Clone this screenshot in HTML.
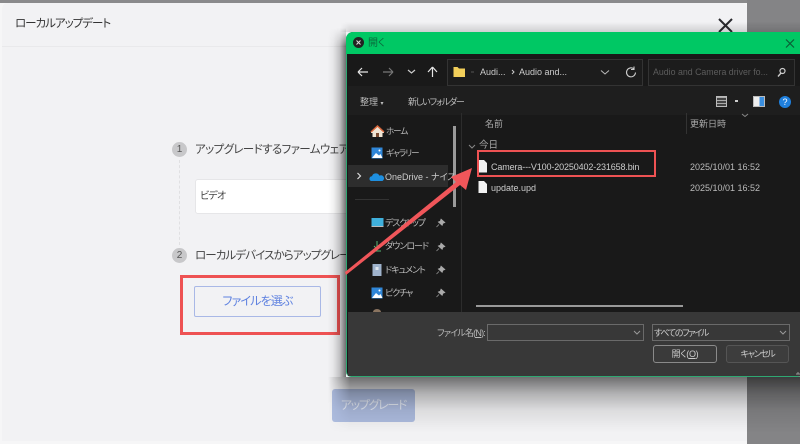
<!DOCTYPE html>
<html lang="ja"><head><meta charset="utf-8"><style>
*{box-sizing:border-box;margin:0;padding:0}
html,body{width:800px;height:444px;overflow:hidden;background:#f6f6f7}
body{position:relative;font-family:"Liberation Sans","Noto Sans CJK JP",sans-serif;font-feature-settings:"palt"}
#wrap{position:absolute;left:0;top:0;width:800px;height:444px;overflow:hidden;filter:blur(.3px)}
.a{position:absolute;white-space:nowrap}
.t{position:absolute;white-space:nowrap;line-height:14px}
#dlg{left:2px;top:3px;width:745px;height:438px;background:#f2f2f4;border-radius:6px 6px 0 0;overflow:hidden}
#win{left:346px;top:32px;width:456px;height:345px;background:#191919;border:1.5px solid #2fa872;border-top:none;border-radius:7px 7px 5px 5px;overflow:hidden}
svg{position:absolute;left:0;top:0;overflow:visible}
</style></head><body><div id="wrap">
<div class="a" style="left:0;top:0;width:800px;height:3px;background:#8a8a8c"></div>
<div class="a" style="left:747px;top:0;width:53px;height:444px;background:#848486"></div>
<div class="a" id="dlg"></div>
<div class="a" style="left:2px;top:46px;width:745px;height:1px;background:#e9e9eb"></div>
<div class="t" style="left:15px;top:17px;font-size:11.500px;letter-spacing:-1px;color:#333">ローカルアップデート</div>
<svg width="800" height="444"><path d="M719 19L732 32M732 19L719 32" stroke="#2a2a2e" stroke-width="2" fill="none"/></svg>
<div class="a" style="left:172px;top:142px;width:15px;height:15px;border-radius:50%;background:#c8c8ca;color:#555;font-size:10px;text-align:center;line-height:15px">1</div>
<div class="t" style="left:195px;top:143px;font-size:11.500px;letter-spacing:-.6px;color:#444">アップグレードするファームウェアを</div>
<div class="a" style="left:179px;top:160px;height:85px;border-left:1px dashed #e0e0e2"></div>
<div class="a" style="left:195px;top:179px;width:170px;height:35px;background:#fff;border:1px solid #e6e6e8;border-radius:3px"></div>
<div class="t" style="left:200px;top:190px;font-size:10px;letter-spacing:-.8px;color:#444">ビデオ</div>
<div class="a" style="left:172px;top:248px;width:15px;height:15px;border-radius:50%;background:#c8c8ca;color:#555;font-size:10px;text-align:center;line-height:15px">2</div>
<div class="t" style="left:195px;top:249px;font-size:11.500px;letter-spacing:-.9px;color:#444">ローカルデバイスからアップグレード</div>
<div class="a" style="left:194px;top:286px;width:127px;height:31px;border:1px solid #a9b8e6;border-radius:2px;color:#5f82e0;font-size:12px;letter-spacing:-.85px;text-align:center;line-height:29px">ファイルを選ぶ</div>
<div class="a" style="left:180px;top:275px;width:160px;height:60px;border:3px solid #ee5253"></div>
<div class="a" style="left:332px;top:389px;width:83px;height:33px;background:#aebde0;border-radius:3px;color:#e6ebf6;font-size:12px;letter-spacing:-1.300px;text-align:center;line-height:33px">アップグレード</div>

<!-- window shadow -->
<div class="a" style="left:328px;top:28px;width:18px;height:349px;background:linear-gradient(90deg,rgba(0,0,0,0),rgba(0,0,0,.05) 30%,rgba(0,0,0,.2) 65%,rgba(0,0,0,.55));-webkit-mask-image:linear-gradient(180deg,transparent,#000 18px);mask-image:linear-gradient(180deg,transparent,#000 18px)"></div>
<div class="a" style="left:328px;top:377px;width:472px;height:56px;background:linear-gradient(180deg,rgba(0,0,0,.55),rgba(0,0,0,.27) 29%,rgba(0,0,0,.09) 59%,rgba(0,0,0,.02) 89%,rgba(0,0,0,0));-webkit-mask-image:linear-gradient(90deg,transparent,#000 22px);mask-image:linear-gradient(90deg,transparent,#000 22px)"></div>
<div class="a" style="left:340px;top:22px;width:460px;height:10px;background:linear-gradient(180deg,rgba(0,0,0,0),rgba(0,0,0,.14));-webkit-mask-image:linear-gradient(90deg,transparent,#000 10px);mask-image:linear-gradient(90deg,transparent,#000 10px)"></div>

<div class="a" id="win"></div>
<div class="a" style="left:346px;top:32px;width:454px;height:22px;background:#00c864;border-radius:7px 0 0 0"></div>
<div class="a" style="left:353px;top:37px;width:11px;height:11px;border-radius:50%;background:#222"></div>
<svg width="800" height="444"><path d="M356.5 40.500l4 4M360.500 40.500l-4 4" stroke="#ddd" stroke-width="1" fill="none"/><path d="M786 39.500l8 8M794 39.500l-8 8" stroke="#0b5c35" stroke-width="1.200" fill="none"/></svg>
<div class="t" style="left:368px;top:37px;font-size:10px;color:#0a6a3c">開く</div>

<div class="a" style="left:348px;top:54px;width:452px;height:32px;background:#191919"></div>
<div class="a" style="left:447px;top:59px;width:196px;height:27px;border:1px solid #333;background:#1c1c1c"></div>
<div class="a" style="left:648px;top:59px;width:147px;height:27px;border:1px solid #333;background:#1c1c1c"></div>
<div class="a" style="left:348px;top:86px;width:452px;height:29px;background:#1e1e1e"></div>
<div class="a" style="left:348px;top:115px;width:452px;height:197px;background:#191919"></div>
<div class="a" style="left:348px;top:165px;width:100px;height:22px;background:#2d2d2d"></div>
<div class="a" style="left:461px;top:113px;width:1px;height:199px;background:#2c2c2c"></div>
<div class="a" style="left:686px;top:113px;width:1px;height:21px;background:#333"></div>
<div class="a" style="left:453px;top:126px;width:2.500px;height:81px;background:#9a9a9a"></div>
<div class="a" style="left:476px;top:305px;width:207px;height:2px;background:#999"></div>
<div class="a" style="left:348px;top:312px;width:452px;height:64px;background:#383838"></div>

<svg width="800" height="444" fill="none">
<path d="M358 72h10M358 72l4-4M358 72l4 4" stroke="#e6e6e6" stroke-width="1.200"/>
<path d="M383 72h10M393 72l-4-4M393 72l-4 4" stroke="#777" stroke-width="1.200"/>
<path d="M408 70l3.500 3 3.500-3" stroke="#ccc" stroke-width="1.200"/>
<path d="M432.500 77V67M432.500 67l-4.500 5M432.500 67l4.500 5" stroke="#e6e6e6" stroke-width="1.200"/>
<path d="M453.500 67h4l1.500 1.500h6v8.500h-11.500z" fill="#f2cf5a"/>
<path d="M471 72h3" stroke="#555"/>
<path d="M512 70l2 2-2 2" stroke="#ccc"/>
<path d="M601 70.500l4 3.500 4-3.500" stroke="#bbb" stroke-width="1"/>
<path d="M634 69a4.500 4.500 0 1 0 1.500 3.500M634 66.500v3h-3" stroke="#ccc" stroke-width="1.100"/>
<circle cx="782.500" cy="71" r="2.500" stroke="#ccc" stroke-width="1.200"/><path d="M781 73l-3 3.500" stroke="#ccc" stroke-width="1.400"/>
<path d="M742 114l3 2.500 3-2.500" stroke="#888"/><path d="M469 145l3 3 3-3" stroke="#888"/>
<path d="M371 132l6.500-6 6.500 6v1h-1.500v4h-10v-4H371z" fill="#f0e4d4"/><path d="M371 132l6.500-6 6.500 6" stroke="#d9663a" stroke-width="1.500"/><rect x="376" y="133" width="3" height="4" fill="#7a4a30"/>
<rect x="371.500" y="147.500" width="11" height="11" fill="#2f86d8"/><path d="M372 158l4-5 3 2.500 1.500-1.500 2 4z" fill="#fff"/><circle cx="379.500" cy="150.500" r="1" fill="#fff"/>
<path d="M357.500 173l3 3-3 3" stroke="#ddd" stroke-width="1.200"/>
<path d="M371 181a2.500 2.500 0 0 1 1-4.800 4 4 0 0 1 7.500-.5 3 3 0 0 1 3 5.300z" fill="#1e8fe0"/>
<rect x="371.500" y="218" width="12" height="8.500" fill="#3fb0dc"/><rect x="371.500" y="226" width="12" height="1" fill="#bbb"/>
<path d="M377 241v8M374 246l3 3 3-3M373 251h8" stroke="#56b874" stroke-width="1"/>
<rect x="372.500" y="264" width="9" height="12" fill="#9fb3cc"/><rect x="375.500" y="267" width="3" height="3" fill="#dfe6ee"/>
<rect x="371.500" y="287.500" width="11" height="11" fill="#2f86d8"/><path d="M372 298l4-5 3 2.500 1.500-1.500 2 4z" fill="#fff"/><circle cx="379.500" cy="290.500" r="1" fill="#fff"/>
<path d="M441 219l4 3.500-2 .8-.8 2.200-4-3.500 2-.8zM439 224.500l-2.500 2.500M441 243l4 3.500-2 .8-.8 2.200-4-3.500 2-.8zM439 248.500l-2.500 2.500M441 266l4 3.500-2 .8-.8 2.200-4-3.500 2-.8zM439 271.500l-2.500 2.500M441 289l4 3.500-2 .8-.8 2.200-4-3.500 2-.8zM439 294.500l-2.500 2.500" fill="#aaa" stroke="#aaa" stroke-width=".6"/>
<path d="M478.500 160h5.500l3 3v9.500h-8.500z M478.500 181h5.500l3 3v9h-8.500z" fill="#f2f2f2"/>
<path d="M355 199.500h34" stroke="#333"/>
<path d="M373 312a4 3 0 0 1 8 0z" fill="#8a7460"/>
<path d="M634 331l3 3 3-3M780 331l3 3 3-3" stroke="#999"/>
<path d="M798 372v2M796 374h4" stroke="#999"/>
</svg>

<div class="t" style="left:480px;top:65px;font-size:9px;color:#ccc">Audi...</div>
<div class="t" style="left:519px;top:65px;font-size:9px;color:#ccc">Audio and...</div>
<div class="t" style="left:653px;top:65px;font-size:8.800px;color:#5c5c5c">Audio and Camera driver fo...</div>

<div class="t" style="left:360px;top:95px;font-size:9px;color:#bbb">整理 <span style="font-size:6px">▾</span></div>
<div class="t" style="left:408px;top:95px;font-size:9px;letter-spacing:-1.200px;color:#bbb">新しいフォルダー</div>
<div class="a" style="left:716px;top:96px;width:11px;height:11px;background:repeating-linear-gradient(#aaa 0 1px,#444 1px 3px);border:1px solid #bbb"></div>
<div class="a" style="left:735px;top:100px;width:3px;height:2px;background:#ccc"></div>
<div class="a" style="left:753px;top:96px;width:12px;height:11px;border:1px solid #bbb;background:linear-gradient(90deg,#eee 0 55%,#3a8fe0 55%)"></div>
<div class="a" style="left:779px;top:96px;width:12px;height:12px;border-radius:50%;background:#1f7fdc;color:#fff;font-size:9px;line-height:12px;text-align:center">?</div>

<div class="t" style="left:485px;top:117px;font-size:9px;color:#aaa">名前</div>
<div class="t" style="left:690px;top:117px;font-size:9px;color:#aaa">更新日時</div>
<div class="t" style="left:479px;top:139px;font-size:9.500px;color:#aaa">今日</div>
<div class="t" style="left:386px;top:124px;font-size:8.500px;letter-spacing:-1px;color:#bbb">ホーム</div>
<div class="t" style="left:386px;top:146px;font-size:8.500px;letter-spacing:-1px;color:#bbb">ギャラリー</div>
<div class="t" style="left:385px;top:170px;font-size:9px;color:#ccc">OneDrive - ナイス</div>
<div class="t" style="left:385px;top:216px;font-size:9px;letter-spacing:-1.200px;color:#bbb">デスクトップ</div>
<div class="t" style="left:385px;top:239px;font-size:9px;letter-spacing:-1px;color:#bbb">ダウンロード</div>
<div class="t" style="left:385px;top:263px;font-size:9px;letter-spacing:-1px;color:#bbb">ドキュメント</div>
<div class="t" style="left:385px;top:286px;font-size:9px;letter-spacing:-1.200px;color:#bbb">ピクチャ</div>
<div class="t" style="left:491px;top:160px;font-size:9px;letter-spacing:-.13px;color:#ccc">Camera---V100-20250402-231658.bin</div>
<div class="t" style="left:491px;top:181px;font-size:9px;color:#ccc">update.upd</div>
<div class="t" style="left:690px;top:160px;font-size:9px;color:#bbb">2025/10/01 16:52</div>
<div class="t" style="left:690px;top:181px;font-size:9px;color:#bbb">2025/10/01 16:52</div>

<div class="t" style="left:437px;top:326px;font-size:9px;letter-spacing:-.8px;color:#bbb">ファイル名(<u>N</u>):</div>
<div class="a" style="left:487px;top:324px;width:157px;height:17px;border:1px solid #6a6a6a"></div>
<div class="a" style="left:652px;top:324px;width:138px;height:17px;border:1px solid #6a6a6a"></div>
<div class="t" style="left:654px;top:326px;font-size:9px;letter-spacing:-1.300px;color:#ccc">すべてのファイル</div>
<div class="a" style="left:653px;top:345px;width:64px;height:18px;border:1px solid #8a8a8a;border-radius:3px;background:#3a3a3a;color:#ccc;font-size:9px;letter-spacing:-.3px;text-align:center;line-height:16px">開く(<u>O</u>)</div>
<div class="a" style="left:726px;top:345px;width:63px;height:18px;border:1px solid #555;border-radius:3px;background:#3d3d3d;color:#ccc;font-size:9px;letter-spacing:-1.400px;text-align:center;line-height:16px">キャンセル</div>

<div class="a" style="left:477px;top:150px;width:179px;height:27px;border:2.500px solid #ee5253"></div>
<svg width="800" height="444"><path d="M345 272L456 182L451 177L472 168L466 190L460 185L346 275z" fill="#f0565a"/></svg>
</div></body></html>
